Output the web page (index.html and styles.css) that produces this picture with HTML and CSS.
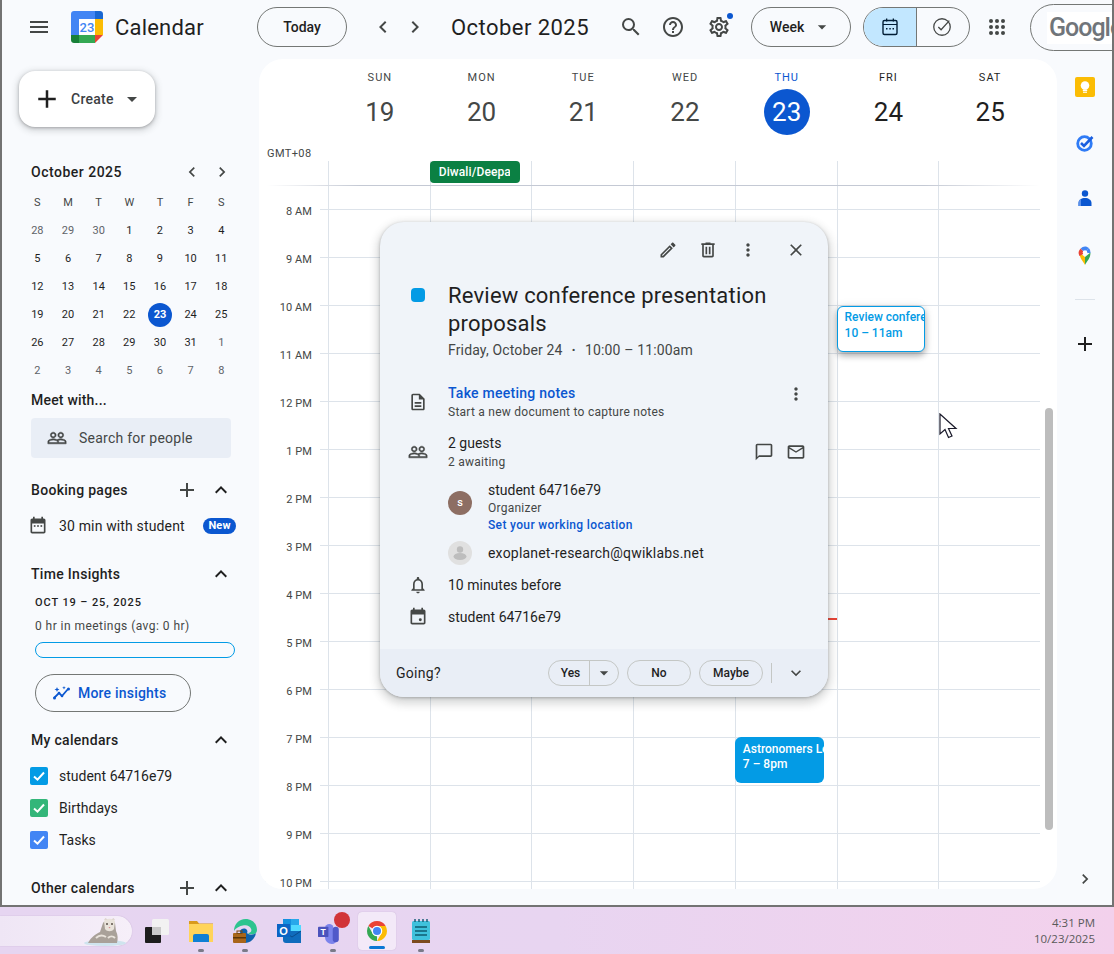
FILE: index.html
```html
<!DOCTYPE html>
<html lang="en">
<head>
<meta charset="utf-8">
<title>Calendar</title>
<link rel="stylesheet" href="styles.css">
</head>
<body>
<svg class="defs" aria-hidden="true">
  <symbol id="menu" viewBox="0 0 24 24"><path d="M3 18h18v-2H3v2zm0-5h18v-2H3v2zm0-7v2h18V6H3z"/></symbol>
  <symbol id="left" viewBox="0 0 24 24"><path d="M15.41 7.41 14 6l-6 6 6 6 1.41-1.41L10.83 12z"/></symbol>
  <symbol id="right" viewBox="0 0 24 24"><path d="M10 6 8.59 7.41 13.17 12l-4.58 4.59L10 18l6-6z"/></symbol>
  <symbol id="search" viewBox="0 0 24 24"><path d="M15.5 14h-.79l-.28-.27A6.471 6.471 0 0 0 16 9.5 6.5 6.5 0 1 0 9.5 16c1.61 0 3.09-.59 4.23-1.57l.27.28v.79l5 4.99L20.49 19l-4.99-5zm-6 0C7.01 14 5 11.99 5 9.5S7.01 5 9.5 5 14 7.01 14 9.5 11.99 14 9.5 14z"/></symbol>
  <symbol id="help" viewBox="0 0 24 24"><path d="M11 18h2v-2h-2v2zm1-16C6.48 2 2 6.48 2 12s4.48 10 10 10 10-4.48 10-10S17.52 2 12 2zm0 18c-4.41 0-8-3.59-8-8s3.59-8 8-8 8 3.59 8 8-3.59 8-8 8zm0-14c-2.21 0-4 1.79-4 4h2c0-1.1.9-2 2-2s2 .9 2 2c0 2-3 1.75-3 5h2c0-2.25 3-2.5 3-5 0-2.21-1.79-4-4-4z"/></symbol>
  <symbol id="gear" viewBox="0 0 24 24"><path d="M19.43 12.98c.04-.32.07-.64.07-.98 0-.34-.03-.66-.07-.98l2.11-1.65c.19-.15.24-.42.12-.64l-2-3.46a.5.5 0 0 0-.61-.22l-2.49 1c-.52-.4-1.08-.73-1.69-.98l-.38-2.65A.488.488 0 0 0 14 2h-4c-.25 0-.46.18-.49.42l-.38 2.65c-.61.25-1.17.59-1.69.98l-2.49-1a.566.566 0 0 0-.18-.03c-.17 0-.34.09-.43.25l-2 3.46c-.13.22-.07.49.12.64l2.11 1.65c-.04.32-.07.65-.07.98 0 .33.03.66.07.98l-2.11 1.65c-.19.15-.24.42-.12.64l2 3.46a.5.5 0 0 0 .61.22l2.49-1c.52.4 1.08.73 1.69.98l.38 2.65c.03.24.24.42.49.42h4c.25 0 .46-.18.49-.42l.38-2.65c.61-.25 1.17-.59 1.69-.98l2.49 1c.06.02.12.03.18.03.17 0 .34-.09.43-.25l2-3.46c.12-.22.07-.49-.12-.64l-2.11-1.65zm-1.98-1.71c.04.31.05.52.05.73 0 .21-.02.43-.05.73l-.14 1.13.89.7 1.08.84-.7 1.21-1.27-.51-1.04-.42-.9.68c-.43.32-.84.56-1.25.73l-1.06.43-.16 1.13-.2 1.35h-1.4l-.19-1.35-.16-1.13-1.06-.43c-.43-.18-.83-.41-1.23-.71l-.91-.7-1.06.43-1.27.51-.7-1.21 1.08-.84.89-.7-.14-1.13c-.03-.31-.05-.54-.05-.74s.02-.43.05-.73l.14-1.13-.89-.7-1.08-.84.7-1.21 1.27.51 1.04.42.9-.68c.43-.32.84-.56 1.25-.73l1.06-.43.16-1.13.2-1.35h1.39l.19 1.35.16 1.13 1.06.43c.43.18.83.41 1.23.71l.91.7 1.06-.43 1.27-.51.7 1.21-1.07.85-.89.7.14 1.13zM12 8c-2.21 0-4 1.79-4 4s1.79 4 4 4 4-1.79 4-4-1.79-4-4-4zm0 6c-1.1 0-2-.9-2-2s.9-2 2-2 2 .9 2 2-.9 2-2 2z"/></symbol>
  <symbol id="apps" viewBox="0 0 24 24"><circle cx="6" cy="6" r="2"/><circle cx="12" cy="6" r="2"/><circle cx="18" cy="6" r="2"/><circle cx="6" cy="12" r="2"/><circle cx="12" cy="12" r="2"/><circle cx="18" cy="12" r="2"/><circle cx="6" cy="18" r="2"/><circle cx="12" cy="18" r="2"/><circle cx="18" cy="18" r="2"/></symbol>
  <symbol id="add" viewBox="0 0 24 24"><path d="M19 13h-6v6h-2v-6H5v-2h6V5h2v6h6v2z"/></symbol>
  <symbol id="drop" viewBox="0 0 24 24"><path d="M7 10l5 5 5-5z"/></symbol>
  <symbol id="up" viewBox="0 0 24 24"><path d="M12 8l-6 6 1.41 1.41L12 10.83l4.59 4.58L18 14z"/></symbol>
  <symbol id="down" viewBox="0 0 24 24"><path d="M16.59 8.59 12 13.17 7.41 8.59 6 10l6 6 6-6z"/></symbol>
  <symbol id="people" viewBox="0 0 24 24"><path stroke="#444746" stroke-width=".6" d="M16.5 13c-1.2 0-3.07.34-4.5 1-1.43-.67-3.3-1-4.5-1C5.33 13 1 14.08 1 16.25V19h22v-2.75c0-2.17-4.33-3.25-6.5-3.25zm-4 4.5h-10v-1.25c0-.54 2.56-1.75 5-1.75s5 1.21 5 1.75v1.25zm9 0H14v-1.25c0-.46-.2-.86-.52-1.22.88-.3 1.96-.53 3.02-.53 2.44 0 5 1.21 5 1.75v1.25zM7.5 12c1.93 0 3.5-1.57 3.5-3.5S9.43 5 7.5 5 4 6.57 4 8.5 5.57 12 7.5 12zm0-5.5c1.1 0 2 .9 2 2s-.9 2-2 2-2-.9-2-2 .9-2 2-2zm9 5.5c1.93 0 3.5-1.57 3.5-3.5S18.43 5 16.5 5 13 6.57 13 8.5s1.57 3.5 3.5 3.5zm0-5.5c1.1 0 2 .9 2 2s-.9 2-2 2-2-.9-2-2 .9-2 2-2z"/></symbol>
  <symbol id="edit" viewBox="0 0 24 24"><path d="M3 17.25V21h3.75L17.81 9.94l-3.75-3.75L3 17.25zM5.92 19H5v-.92l9.06-9.06.92.92L5.92 19zM20.71 5.63l-2.34-2.34c-.39-.39-1.02-.39-1.41 0l-1.83 1.83 3.75 3.75 1.83-1.83c.39-.39.39-1.02 0-1.41z"/></symbol>
  <symbol id="trash" viewBox="0 0 24 24"><path d="M15 4V3H9v1H4v2h1v13c0 1.1.9 2 2 2h10c1.1 0 2-.9 2-2V6h1V4h-5zm2 15H7V6h10v13zM9 8h2v9H9zm4 0h2v9h-2z"/></symbol>
  <symbol id="more" viewBox="0 0 24 24"><path d="M12 8c1.1 0 2-.9 2-2s-.9-2-2-2-2 .9-2 2 .9 2 2 2zm0 2c-1.1 0-2 .9-2 2s.9 2 2 2 2-.9 2-2-.9-2-2-2zm0 6c-1.1 0-2 .9-2 2s.9 2 2 2 2-.9 2-2-.9-2-2-2z"/></symbol>
  <symbol id="close" viewBox="0 0 24 24"><path d="M19 6.41 17.59 5 12 10.59 6.41 5 5 6.41 10.59 12 5 17.59 6.41 19 12 13.41 17.59 19 19 17.59 13.41 12z"/></symbol>
  <symbol id="doc" viewBox="0 0 24 24"><path d="M8 16h8v2H8zm0-4h8v2H8zm6-10H6c-1.1 0-2 .9-2 2v16c0 1.1.89 2 1.99 2H18c1.1 0 2-.9 2-2V8l-6-6zm4 18H6V4h7v5h5v11z"/></symbol>
  <symbol id="chat" viewBox="0 0 24 24"><path d="M20 2H4c-1.1 0-2 .9-2 2v18l4-4h14c1.1 0 2-.9 2-2V4c0-1.1-.9-2-2-2zm0 14H6l-2 2V4h16v12z"/></symbol>
  <symbol id="mail" viewBox="0 0 24 24"><path d="M20 4H4c-1.1 0-2 .9-2 2v12c0 1.1.9 2 2 2h16c1.1 0 2-.9 2-2V6c0-1.1-.9-2-2-2zm0 14H4V8l8 5 8-5v10zm-8-7L4 6h16l-8 5z"/></symbol>
  <symbol id="bell" viewBox="0 0 24 24"><path d="M12 22c1.1 0 2-.9 2-2h-4c0 1.1.9 2 2 2zm6-6v-5c0-3.07-1.63-5.64-4.5-6.32V4c0-.83-.67-1.5-1.5-1.5s-1.5.67-1.5 1.5v.68C7.64 5.36 6 7.92 6 11v5l-2 2v1h16v-1l-2-2zm-2 1H8v-6c0-2.48 1.51-4.5 4-4.5s4 2.02 4 4.5v6z"/></symbol>
  <symbol id="event" viewBox="0 0 24 24"><path d="M16 1v2H8V1H6v2H5c-1.1 0-2 .9-2 2v14c0 1.1.9 2 2 2h14c1.1 0 2-.9 2-2V5c0-1.1-.9-2-2-2h-1V1h-2zm3 18H5V9h14v10z"/><rect x="13" y="13.5" width="3.5" height="3.5" rx="1.7"/></symbol>
  <symbol id="book" viewBox="0 0 24 24"><path d="M16 1v2H8V1H6v2H5c-1.1 0-2 .9-2 2v14c0 1.1.9 2 2 2h14c1.1 0 2-.9 2-2V5c0-1.1-.9-2-2-2h-1V1h-2zm3 18H5V9h14v10z"/><rect x="7" y="11" width="2" height="2"/><rect x="11" y="11" width="2" height="2"/><rect x="15" y="11" width="2" height="2"/></symbol>
</svg>

<div class="window">
  <header class="topbar">
    <div class="brand">
      <svg class="ic ic-menu"><use href="#menu"/></svg>
      <svg class="logo" viewBox="0 0 32 32">
        <path d="M24 0H3C1.3 0 0 1.3 0 3v21h8V8h16z" fill="#4285f4"/>
        <path d="M24 0v8h8V3c0-1.700-1.300-3-3-3z" fill="#1967d2"/>
        <path d="M24 8h8v16h-8z" fill="#fbbc04"/>
        <path d="M8 24h16v8H8z" fill="#34a853"/>
        <path d="M0 24v5c0 1.700 1.300 3 3 3h5v-8z" fill="#188038"/>
        <path d="M24 24v8l8-8z" fill="#ea4335"/>
        <path d="M8 8h16v16H8z" fill="#fff"/>
        <text x="16" y="21" text-anchor="middle" class="logo-num">23</text>
      </svg>
      <span class="brand-name">Calendar</span>
    </div>
    <button class="pill today">Today</button>
    <svg class="ic ml24"><use href="#left"/></svg>
    <svg class="ic ml8"><use href="#right"/></svg>
    <h1 class="period">October 2025</h1>
    <svg class="ic ml8 dark"><use href="#search"/></svg>
    <svg class="ic ml18 dark"><use href="#help"/></svg>
    <span class="settings"><svg class="ic dark"><use href="#gear"/></svg><i class="badge-dot"></i></span>
    <button class="pill week">Week<svg class="ic-w"><use href="#drop"/></svg></button>
    <div class="segment">
      <span class="seg seg-on"><svg class="seg-ic" viewBox="0 0 20 20"><rect x="3" y="3.500" width="14" height="14" rx="1.500" fill="none" stroke="#001d35" stroke-width="1.400"/><path d="M3 7h14v1H3zM6 1.500h1.300v3H6zM12.700 1.500H14v3h-1.300zM6 11h1.500v1.500H6zM9.300 11h1.500v1.500H9.300zM12.500 11H14v1.500h-1.500z" fill="#001d35"/></svg></span>
      <span class="seg seg-off"><svg class="seg-ic2" viewBox="0 0 24 24"><circle cx="12" cy="12" r="9" fill="none" stroke="#444746" stroke-width="1.400"/><path d="M8 12l3 3 9-10" fill="none" stroke="#444746" stroke-width="1.400"/></svg></span>
    </div>
    <svg class="ic ml15 dark"><use href="#apps"/></svg>
    <div class="account"><span class="google">Google</span></div>
  </header>

  <div class="main">
    <aside class="sidebar">
      <button class="create"><svg class="ic-plus"><use href="#add"/></svg><span>Create</span><svg class="ic dark"><use href="#drop"/></svg></button>

      <div class="mini-head"><span>October 2025</span><svg class="ic-m"><use href="#left"/></svg><svg class="ic-m"><use href="#right"/></svg></div>
      <div class="mini">
        <b class="wd">S</b><b class="wd">M</b><b class="wd">T</b><b class="wd">W</b><b class="wd">T</b><b class="wd">F</b><b class="wd">S</b>
        <span class="off">28</span><span class="off">29</span><span class="off">30</span><span>1</span><span>2</span><span>3</span><span>4</span>
        <span>5</span><span>6</span><span>7</span><span>8</span><span>9</span><span>10</span><span>11</span>
        <span>12</span><span>13</span><span>14</span><span>15</span><span>16</span><span>17</span><span>18</span>
        <span>19</span><span>20</span><span>21</span><span>22</span><span class="now"><em>23</em></span><span>24</span><span>25</span>
        <span>26</span><span>27</span><span>28</span><span>29</span><span>30</span><span>31</span><span class="off">1</span>
        <span class="off">2</span><span class="off">3</span><span class="off">4</span><span class="off">5</span><span class="off">6</span><span class="off">7</span><span class="off">8</span>
      </div>

      <div class="sec-title meet">Meet with...</div>
      <div class="people-search"><svg class="ic-m"><use href="#people"/></svg><span>Search for people</span></div>

      <div class="sec-head booking"><span>Booking pages</span><svg class="ic add-ic"><use href="#add"/></svg><svg class="ic chev"><use href="#up"/></svg></div>
      <div class="book-row"><svg class="ic-m"><use href="#book"/></svg><span>30 min with student</span><b class="new">New</b></div>

      <div class="sec-head insights"><span>Time Insights</span><svg class="ic chev"><use href="#up"/></svg></div>
      <div class="range">OCT 19 – 25, 2025</div>
      <div class="meetings">0 hr in meetings (avg: 0 hr)</div>
      <div class="bar"></div>
      <button class="more-ins">
        <svg class="ic-m" viewBox="0 0 20 20"><path d="M2 15l5-5 3 3 6-7" fill="none" stroke="#0b57d0" stroke-width="1.800"/><circle cx="2.500" cy="15" r="1.500" fill="#0b57d0"/><circle cx="7" cy="10" r="1.300" fill="#0b57d0"/><circle cx="10" cy="13" r="1.300" fill="#0b57d0"/><circle cx="16.500" cy="6" r="1.500" fill="#0b57d0"/><path d="M5 4l.7 1.800L7.500 6.500l-1.800.7L5 9l-.7-1.800L2.500 6.500l1.800-.7zM12 3l.5 1.300 1.300.5-1.300.5L12 6.500l-.5-1.200-1.300-.5 1.300-.5z" fill="#0b57d0"/></svg>
        <span>More insights</span>
      </button>

      <div class="sec-head mycal"><span>My calendars</span><svg class="ic chev"><use href="#up"/></svg></div>
      <label class="cal-row"><i class="check c-blue"><svg viewBox="0 0 18 18"><path d="M4 9.500l3.500 3.200L14 5.500" fill="none" stroke="#fff" stroke-width="2"/></svg></i>student 64716e79</label>
      <label class="cal-row"><i class="check c-green"><svg viewBox="0 0 18 18"><path d="M4 9.500l3.500 3.200L14 5.500" fill="none" stroke="#fff" stroke-width="2"/></svg></i>Birthdays</label>
      <label class="cal-row"><i class="check c-task"><svg viewBox="0 0 18 18"><path d="M4 9.500l3.500 3.200L14 5.500" fill="none" stroke="#fff" stroke-width="2"/></svg></i>Tasks</label>

      <div class="sec-head other"><span>Other calendars</span><svg class="ic add-ic"><use href="#add"/></svg><svg class="ic chev"><use href="#up"/></svg></div>
    </aside>

    <section class="panel">
      <div class="days-head">
        <div class="dh"><small>SUN</small><strong>19</strong></div>
        <div class="dh"><small>MON</small><strong>20</strong></div>
        <div class="dh"><small>TUE</small><strong>21</strong></div>
        <div class="dh"><small>WED</small><strong>22</strong></div>
        <div class="dh dh-today"><small>THU</small><strong>23</strong></div>
        <div class="dh dh-next"><small>FRI</small><strong>24</strong></div>
        <div class="dh dh-next"><small>SAT</small><strong>25</strong></div>
      </div>
      <div class="gmt">GMT+08</div>
      <div class="allday">
        <div class="ad"></div><div class="ad"><span class="chip"><span class="chip-text">Diwali/Deepavali</span></span></div><div class="ad"></div><div class="ad"></div><div class="ad"></div><div class="ad"></div><div class="ad"></div>
      </div>
      <div class="timegrid">
        <div class="hours">
          <span>8 AM</span><span>9 AM</span><span>10 AM</span><span>11 AM</span><span>12 PM</span><span>1 PM</span><span>2 PM</span><span>3 PM</span><span>4 PM</span><span>5 PM</span><span>6 PM</span><span>7 PM</span><span>8 PM</span><span>9 PM</span><span>10 PM</span>
        </div>
        <div class="day"></div>
        <div class="day"></div>
        <div class="day"></div>
        <div class="day"></div>
        <div class="day">
          <i class="nowline"></i>
          <div class="ev ev-astro"><b>Astronomers Lecture</b><b>7 – 8pm</b></div>
        </div>
        <div class="day">
          <div class="ev ev-review"><b>Review conference</b><b>10 – 11am</b></div>
        </div>
        <div class="day"></div>
      </div>
      <i class="scroll"></i>
    </section>

    <nav class="rail">
      <span class="slot"><svg class="rail-ic" viewBox="0 0 20 20"><rect width="20" height="20" rx="2" fill="#fbbc04"/><circle cx="10" cy="8.500" r="4.300" fill="#fff"/><rect x="7.800" y="12.500" width="4.400" height="1.500" fill="#fff"/><rect x="8" y="14.600" width="4" height="1.200" fill="#fff"/></svg></span>
      <span class="slot"><svg class="rail-ic" viewBox="0 0 20 20"><circle cx="9.500" cy="10.500" r="6.800" fill="none" stroke="#2f7bf6" stroke-width="2.800"/><path d="M6 10l3 3 8.500-9" fill="none" stroke="#1a5fe0" stroke-width="2.600"/></svg></span>
      <span class="slot"><svg class="rail-ic" viewBox="0 0 20 20"><circle cx="10" cy="4.500" r="3.200" fill="#0b57d0"/><path d="M3.500 17v-3c0-3 3-5 6.500-5s6.500 2 6.500 5v3z" fill="#0b57d0"/><path d="M3.500 14c0-2 1-3.400 2.500-4.200V17H3.500z" fill="#5a90ea"/></svg></span>
      <span class="slot"><svg class="rail-ic" viewBox="0 0 20 20"><path d="M10 20c-1-3-5.500-6-5.500-12.500L10 12z" fill="#fbbc04"/><path d="M10 20c1-3 5.500-6 5.500-12.500L10 12z" fill="#34a853"/><path d="M5.700 3.600 10 8l-5.500 3A6 6 0 0 1 5.700 3.600z" fill="#ea4335"/><path d="M5.700 3.600A6 6 0 0 1 10 1.500c1.500 0 2.800.6 3.800 1.500L10 8z" fill="#4285f4"/><path d="M13.800 3A6 6 0 0 1 15.500 8L10 8z" fill="#4285f4"/><circle cx="10" cy="7.500" r="2.300" fill="#fff"/></svg></span>
      <hr class="rail-sep">
      <span class="slot-plus"><svg class="ic plus-dark"><use href="#add"/></svg></span>
      <svg class="ic-m rail-more"><use href="#right"/></svg>
    </nav>
  </div>
</div>

<footer class="taskbar">
  <div class="win-search"><svg class="leopard" viewBox="0 0 44 30"><ellipse cx="23" cy="27" rx="21" ry="3" fill="#cfe4ee"/><path d="M6 27c3-6 8-9 12-11l3-9c2-4 10-4 12 0l1 8c2 4 2 8 1 12z" fill="#a9a199"/><path d="M22 5c2-3 9-3 11 0l-1 8c-2 3-7 3-9 0z" fill="#e9e3db"/><path d="M22 4l1.500-2 2 1.500zM33 4l-1.500-2-2 1.500z" fill="#d9d2c8"/><circle cx="25" cy="8" r="1" fill="#5a5148"/><circle cx="30" cy="8" r="1" fill="#5a5148"/><path d="M26.500 11h2l-1 1.500z" fill="#d58b8b"/><path d="M14 22c3-3 7-3 10-1M26 22c2-2 5-2 7 0" stroke="#e9e3db" stroke-width="2" fill="none"/></svg></div>
  <span class="tb"><svg class="tb-ic" viewBox="0 0 24 24"><rect x="7" y="0" width="17" height="16" rx="1.500" fill="#f2f2f2"/><rect x="0" y="8" width="16" height="16" rx="1" fill="#1d1d1d"/><rect x="7" y="8" width="9" height="8" fill="#c9c9c9"/></svg></span>
  <span class="tb dotted"><svg class="tb-ic" viewBox="0 0 24 24"><path d="M0 2h8l2 2.500h14V8H0z" fill="#d99a1c"/><path d="M0 5h24v18H0z" fill="#ffd45a"/><path d="M4 23v-6a2 2 0 0 1 2-2h12a2 2 0 0 1 2 2v6z" fill="#0f7fd4"/></svg></span>
  <span class="tb dotted"><svg class="tb-ic" viewBox="0 0 24 24"><path d="M1 12C1 5 6 0 12.500 0 19 0 24 4.500 24 11c0 3-2.500 4.500-5 4.500-2 0-4-.7-4-1.700 3 .6 4-2 3-4C17 7 14 5.700 11 6.300 6 7 2.500 9.500 1 12z" fill="#2cc48f"/><path d="M7 12c2-3 5-3 7-1 1 2 0 3 0 3 2 2 6 2.500 9 0-1 6-6 10-11 10-2 0-3-.5-4-1z" fill="#0f62ad"/><rect x="0" y="14" width="13" height="10" rx="1" fill="#a9661a"/><rect x="0" y="18" width="13" height="1.500" fill="#5c3506"/><rect x="4" y="12" width="5" height="2.500" fill="none" stroke="#7a4a10"/></svg></span>
  <span class="tb"><svg class="tb-ic" viewBox="0 0 24 24"><rect x="6" y="0" width="16" height="12" fill="#1490df"/><rect x="14" y="0" width="8" height="6" fill="#28a8ea"/><rect x="14" y="6" width="10" height="6" fill="#50d9ff"/><path d="M6 12h18v12H9a3 3 0 0 1-3-3z" fill="#0f6cbd"/><path d="M24 12l-9 6-9-6" fill="none" stroke="#0a4d8c"/><rect x="0" y="5" width="13" height="13" fill="#0a64c4"/><text x="6.500" y="15.500" text-anchor="middle" class="tb-letter">O</text></svg></span>
  <span class="tb dotted teams"><svg class="tb-ic tb-teams" viewBox="0 0 30 30"><circle cx="13" cy="12" r="5" fill="#7b83eb"/><path d="M8 14h14v10a6 6 0 0 1-6 6 8 8 0 0 1-8-8z" fill="#7b83eb"/><rect x="17" y="10" width="7" height="18" rx="3.500" fill="#5059c9"/><rect x="0" y="10" width="12" height="12" rx="1" fill="#4b53bc"/><text x="6" y="20" text-anchor="middle" class="tb-letter tb-t">T</text></svg><i class="notif"></i></span>
  <span class="tb tb-active"><svg class="tb-ic" viewBox="0 0 48 48"><path d="M6.680 14A20 20 0 0 1 41.320 14H24A10 10 0 0 0 15.340 19z" fill="#ea4335"/><path d="M41.320 14A20 20 0 0 1 24 44L32.660 29A10 10 0 0 0 32.660 19 10 10 0 0 0 24 14z" fill="#fbbc04"/><path d="M24 44A20 20 0 0 1 6.680 14L15.340 29A10 10 0 0 0 24 34z" fill="#34a853"/><circle cx="24" cy="24" r="10.500" fill="#fff"/><circle cx="24" cy="24" r="8" fill="#4285f4"/></svg><i class="active-bar"></i></span>
  <span class="tb dotted"><svg class="tb-ic tb-note" viewBox="0 0 18 24"><rect x="0" y="2" width="18" height="19" rx="1.500" fill="#3fc1dc"/><rect x="0" y="21" width="18" height="3" fill="#7c4a1e"/><path d="M3 0v3M7 0v3M11 0v3M15 0v3" stroke="#1b5f78" stroke-width="1.500"/><path d="M3 8h12M3 12h12M3 16h12" stroke="#0f5c72" stroke-width="1.500"/></svg></span>
  <div class="clock"><span>4:31 PM</span><span>10/23/2025</span></div>
</footer>

<svg class="pointer" viewBox="0 0 20 30"><path d="M1 1v20l5-4.500 3.500 8 3.500-1.500-3.500-7.500H17z" fill="#fff" stroke="#1a1a2a" stroke-width="1.200"/></svg>

<article class="popup">
  <div class="pop-tools">
    <span class="tool"><svg class="ic-m dark"><use href="#edit"/></svg></span>
    <span class="tool"><svg class="ic-m dark"><use href="#trash"/></svg></span>
    <span class="tool"><svg class="ic-m dark"><use href="#more"/></svg></span>
    <span class="tool tool-close"><svg class="ic-m dark"><use href="#close"/></svg></span>
  </div>
  <div class="row row-title">
    <i class="color"></i>
    <div>
      <h2>Review conference presentation proposals</h2>
      <p class="when">Friday, October 24<span class="sep">·</span>10:00 – 11:00am</p>
    </div>
  </div>
  <div class="row row-notes">
    <svg class="ic-m row-ic"><use href="#doc"/></svg>
    <div><a class="link">Take meeting notes</a><p class="sub">Start a new document to capture notes</p></div>
    <svg class="ic-m row-more dark"><use href="#more"/></svg>
  </div>
  <div class="row row-guests">
    <svg class="ic-m row-ic"><use href="#people"/></svg>
    <div><div class="t14">2 guests</div><p class="sub">2 awaiting</p></div>
    <div class="guest-actions"><svg class="ic-m"><use href="#chat"/></svg><svg class="ic-m"><use href="#mail"/></svg></div>
  </div>
  <div class="guest g-first">
    <span class="avatar av-s">s</span>
    <div><div class="t14">student 64716e79</div><p class="sub">Organizer</p><a class="link link-s">Set your working location</a></div>
  </div>
  <div class="guest g-second">
    <span class="avatar av-p"><svg viewBox="0 0 24 24"><circle cx="12" cy="8.500" r="3.200" fill="#bdbdbd"/><ellipse cx="12" cy="15.500" rx="6.500" ry="3.500" fill="#bdbdbd"/></svg></span>
    <div class="t14 email">exoplanet-research@qwiklabs.net</div>
  </div>
  <div class="row row-rem"><svg class="ic-m row-ic"><use href="#bell"/></svg><div class="t14">10 minutes before</div></div>
  <div class="row row-cal"><svg class="ic-m row-ic"><use href="#event"/></svg><div class="t14">student 64716e79</div></div>
  <div class="pop-foot">
    <span class="going">Going?</span>
    <span class="rsvp rsvp-yes"><span class="yes">Yes</span><span class="yes-drop"><svg class="ic-m"><use href="#drop"/></svg></span></span>
    <span class="rsvp rsvp-no">No</span>
    <span class="rsvp rsvp-maybe">Maybe</span>
    <i class="foot-sep"></i>
    <svg class="ic-m foot-more dark"><use href="#down"/></svg>
  </div>
</article>
</body>
</html>
```
FILE: styles.css
```css
* { box-sizing: border-box; }
html, body { margin: 0; height: 954px; overflow: hidden; }
body { position: relative; font-family: Roboto, "Liberation Sans", sans-serif; color: #1f1f1f; font-size: 14px; background: #f8fafd; }
.defs { position: absolute; width: 0; height: 0; }
button { font: inherit; color: inherit; background: none; padding: 0; }
p, h1, h2 { margin: 0; font-weight: 400; }
svg { display: block; flex: none; fill: #444746; }
i, em { font-style: normal; display: block; }

.ic { width: 24px; height: 24px; }
.ic-m { width: 20px; height: 20px; }
.ic-w { width: 20px; height: 20px; }
.ic-plus { width: 30px; height: 30px; fill: #1f1f1f; }
.plus-dark { fill: #1f1f1f; }
.dark { fill: #444746; }
.chev { fill: #1f1f1f; }
.ml8 { margin-left: 8px; }
.ml15 { margin-left: 15px; }
.ml18 { margin-left: 18px; }
.ml24 { margin-left: 24px; }

.window { height: 907px; display: flex; flex-direction: column; border-left: 2px solid #737373; border-right: 2px solid #737373; border-bottom: 2px solid #737373; overflow: hidden; background: #f8fafd; }

/* Top bar */
.topbar { height: 59px; flex: none; display: flex; align-items: center; padding-bottom: 5px; }
.brand { width: 255px; flex: none; display: flex; align-items: center; }
.ic-menu { margin-left: 25px; }
.logo { width: 32px; height: 32px; margin-left: 20px; }
.logo-num { font: 500 13px Roboto, sans-serif; fill: #4285f4; }
.brand-name { font-size: 22px; margin-left: 12px; letter-spacing: .2px; }
.pill { height: 40px; border: 1px solid #747775; border-radius: 20px; display: flex; align-items: center; justify-content: center; font-weight: 500; font-size: 14px; flex: none; }
.today { width: 90px; }
.period { font-size: 22px; width: 160px; margin-left: 24px; letter-spacing: .45px; flex: none; }
.settings { position: relative; margin-left: 22px; width: 24px; height: 24px; flex: none; }
.badge-dot { position: absolute; width: 6px; height: 6px; border-radius: 50%; background: #0b57d0; top: -2px; right: -2px; }
.week { width: 100px; margin-left: 20px; gap: 8px; }
.segment { width: 107px; height: 40px; margin-left: 12px; border: 1px solid #747775; border-radius: 20px; display: flex; overflow: hidden; flex: none; }
.seg { flex: 1; display: flex; align-items: center; justify-content: center; }
.seg-on { background: #c2e7ff; border-right: 1px solid #747775; flex: none; width: 53px; }
.seg-off { padding-right: 3px; }
.seg-ic { width: 20px; height: 20px; }
.seg-ic2 { width: 22px; height: 22px; }
.account { margin-left: 21px; width: 120px; height: 47px; flex: none; border: 1px solid #747775; border-radius: 24px 0 0 24px; padding: 7px 0 0 16px; }
.google { display: block; background: #fff; height: 32px; padding-left: 2px; font: 500 25px/31px Roboto, sans-serif; color: #70757a; letter-spacing: -1px; }

/* Main */
.main { flex: 1; display: flex; min-height: 0; }
.sidebar { width: 257px; flex: none; padding-left: 29px; overflow: hidden; }
.create { display: flex; align-items: center; width: 136px; height: 56px; margin: 12px 0 0 -12px; background: #fff; border: 0; border-radius: 16px; padding-left: 13px; font-weight: 500; font-size: 14px; letter-spacing: .25px; box-shadow: 0 1px 3px rgba(60,64,67,.35), 0 2px 6px 2px rgba(60,64,67,.18); }
.create span { margin-left: 9px; color: #3c4043; }
.create .ic { margin-left: 6px; }
.mini-head { display: flex; align-items: center; width: 201px; height: 20px; margin-top: 35px; font-weight: 500; gap: 10px; letter-spacing: .5px; }
.mini-head span { flex: 1; }
.mini { display: grid; grid-template-columns: repeat(7, 30.67px); grid-auto-rows: 28px; margin: 7px 0 0 -9px; font-size: 11px; font-weight: 400; text-align: center; line-height: 28px; color: #1f1f1f; }
.mini .wd { font-weight: 400; color: #444746; }
.mini .off { color: #5f6368; font-weight: 400; }
.mini .now { display: flex; align-items: center; justify-content: center; }
.mini .now em { width: 24px; height: 24px; line-height: 24px; border-radius: 50%; background: #0b57d0; color: #fff; font-weight: 700; }
.sec-title { font-weight: 500; line-height: 20px; letter-spacing: .2px; }
.meet { margin-top: 5px; }
.people-search { display: flex; align-items: center; gap: 12px; width: 200px; height: 40px; margin-top: 8px; padding-left: 16px; background: #e9eef6; border-radius: 4px; color: #444746; letter-spacing: .25px; }
.sec-head { display: flex; align-items: center; width: 202px; height: 20px; font-weight: 500; letter-spacing: .3px; }
.sec-head span { flex: 1; }
.add-ic { margin-right: 10px; fill: #444746; }
.booking { margin-top: 22px; }
.book-row { display: flex; align-items: center; width: 208px; height: 20px; margin: 16px 0 0 -3px; gap: 11px; letter-spacing: .15px; }
.book-row .new { margin-left: auto; width: 33px; height: 16px; line-height: 16px; text-align: center; font-size: 11px; border-radius: 8px; background: #0b57d0; color: #fff; font-weight: 700; }
.insights { margin-top: 28px; }
.range { margin: 11px 0 0 4px; font-size: 11px; line-height: 16px; font-weight: 500; letter-spacing: .9px; }
.meetings { margin: 7px 0 0 4px; font-size: 12px; line-height: 16px; color: #444746; letter-spacing: .45px; }
.bar { width: 200px; height: 16px; margin: 8px 0 0 4px; border: 1px solid #039be5; border-radius: 8px; }
.more-ins { display: flex; align-items: center; gap: 6px; width: 156px; height: 38px; margin: 16px 0 0 4px; padding-left: 16px; border: 1px solid #747775; border-radius: 19px; color: #0b57d0; font-weight: 500; font-size: 14px; letter-spacing: .2px; }
.mycal { margin-top: 18px; }
.cal-row { display: flex; align-items: center; height: 32px; margin-left: -1px; gap: 11px; }
.mycal + .cal-row { margin-top: 10px; }
.check { width: 18px; height: 18px; border-radius: 2px; }
.c-blue { background: #039be5; }
.c-green { background: #33b679; }
.c-task { background: #4285f4; }
.other { margin-top: 22px; }

/* Calendar panel */
.panel { position: relative; width: 798px; height: 830px; flex: none; background: #fff; border-radius: 24px; padding-right: 17px; overflow: hidden; }
.days-head { display: grid; grid-template-columns: repeat(7, 1fr); margin-left: 69px; height: 84px; }
.dh { display: flex; flex-direction: column; align-items: center; padding: 12px 0 0 2px; color: #444746; }
.dh small { font-size: 11px; line-height: 14px; font-weight: 400; letter-spacing: 1px; }
.dh strong { width: 46px; height: 46px; margin-top: 4px; font-size: 26px; line-height: 46px; text-align: center; font-weight: 400; border-radius: 50%; }
.dh-today small { color: #0b57d0; }
.dh-today strong { background: #0b57d0; color: #fff; }
.dh-next, .dh-next small { color: #1f1f1f; }
.gmt { height: 18px; margin-left: 8px; font-size: 11px; line-height: 22px; color: #444746; letter-spacing: .4px; }
.allday { position: relative; display: grid; grid-template-columns: repeat(7, 1fr); margin-left: 69px; height: 25px; }
.ad { border-left: 1px solid #dde3ea; min-width: 0; }
.allday::after { content: ""; position: absolute; left: -61px; right: 0; bottom: 0; height: 1px; background: linear-gradient(90deg, #fff, #c4c9d4 12%, #c4c9d4 85%, #fff); }
.chip { display: block; width: 90px; height: 22px; margin-left: -1px; padding: 0 10px 0 9px; background: #0b8043; color: #fff; font-size: 12px; font-weight: 500; line-height: 22px; border-radius: 4px; letter-spacing: .1px; }
.chip-text { display: block; overflow: hidden; white-space: nowrap; }
.timegrid { display: grid; grid-template-columns: 61px 8px repeat(7, 1fr); height: 703px; background: linear-gradient(#dde3ea 1px, transparent 1px) 0 23px / 100% 48px; }
.hours { grid-column: 1 / 3; grid-row: 1; display: flex; flex-direction: column; background: linear-gradient(90deg, #fff 61px, transparent 61px); padding-top: 14px; }
.hours span { flex: none; height: 48px; line-height: 24px; font-size: 11px; color: #444746; text-align: right; padding-right: 8px; width: 61px; letter-spacing: .1px; }
.day { position: relative; grid-row: 1; border-left: 1px solid #dde3ea; min-width: 0; }
.nowline { position: absolute; left: 0; right: 0; top: 432px; height: 2px; background: #ea4335; }
.ev { position: absolute; overflow: hidden; white-space: nowrap; font-size: 12px; line-height: 15px; border-radius: 6px; }
.ev b { display: block; font-weight: 500; }
.ev-astro { left: -1px; top: 551px; width: 89px; height: 46px; padding: 5px 0 0 8px; background: #039be5; color: #fff; }
.ev-review { left: -1px; top: 120px; width: 88px; height: 46px; line-height: 16px; background: #fff; color: #039be5; border: 1px solid #039be5; padding: 2px 0 0 7px; box-shadow: 0 4px 6px rgba(0,0,0,.25), 0 1px 10px rgba(0,0,0,.15); }
.scroll { position: absolute; right: 4px; top: 349px; width: 8px; height: 422px; background: #bdbdbd; border-radius: 4px; }

/* Rail */
.rail { flex: 1; display: flex; flex-direction: column; align-items: center; padding-bottom: 16px; }
.slot { height: 56px; flex: none; display: flex; align-items: center; }
.rail-ic { width: 20px; height: 20px; }
.rail-sep { width: 20px; height: 1px; margin: 16px 0 0; border: 0; background: #dde3ea; flex: none; }
.slot-plus { margin-top: 32px; }
.rail-more { margin-top: auto; }

/* Taskbar */
.taskbar { height: 47px; display: flex; align-items: center; background: linear-gradient(90deg, #e6d5f1, #e8d5f1 50%, #f3d1ec); }
.win-search { width: 132px; height: 30px; margin: 0 3px 0 0; display: flex; justify-content: flex-end; align-items: flex-end; background: linear-gradient(90deg, #efe6f5, #f6eff9); border-radius: 0 15px 15px 0; padding-right: 6px; box-shadow: 0 0 1px rgba(90,60,110,.4); }
.leopard { width: 44px; height: 30px; }
.tb { position: relative; width: 44px; height: 38px; flex: none; display: flex; align-items: center; justify-content: center; }
.tb-ic { width: 24px; height: 24px; }
.tb-note { width: 18px; }
.tb-teams { width: 26px; height: 26px; margin-left: -4px; }
.tb-letter { font: 700 11px "Liberation Sans", sans-serif; fill: #fff; }
.tb-t { font-size: 10px; }
.dotted::after { content: ""; position: absolute; left: 19px; bottom: -2px; width: 6px; height: 3px; border-radius: 2px; background: #7a7a88; }
.notif { position: absolute; width: 16px; height: 16px; border-radius: 50%; background: #d13438; right: 5px; top: 0; }
.tb-active { background: #f3e9f8; border-radius: 4px; width: 38px; margin: 0 3px; box-shadow: 0 0 1px rgba(120,90,140,.4); }
.active-bar { position: absolute; left: 11px; bottom: 1px; width: 16px; height: 3px; border-radius: 2px; background: #0b78d4; }
.clock { margin-left: auto; padding-right: 19px; display: flex; flex-direction: column; align-items: flex-end; font: 11.5px/16px "Open Sans", sans-serif; color: #5a5a5a; }

.pointer { position: absolute; left: 939px; top: 413px; width: 20px; height: 30px; }

/* Event popup */
.popup { position: absolute; left: 380px; top: 222px; width: 448px; height: 475px; background: #f0f4f9; border-radius: 24px; overflow: hidden; box-shadow: 0 4px 8px 3px rgba(60,64,67,.2), 0 1px 3px rgba(60,64,67,.35); }
.pop-tools { display: flex; justify-content: flex-end; height: 56px; align-items: center; padding-right: 12px; }
.tool { width: 40px; height: 40px; display: flex; align-items: center; justify-content: center; }
.tool-close { margin-left: 8px; }
.row { display: grid; grid-template-columns: 68px 1fr auto; padding-right: 22px; }
.row-title { margin-top: 4px; }
.color { width: 14px; height: 14px; margin: 6px 0 0 31px; border-radius: 4px; background: #039be5; }
h2 { font-size: 22px; line-height: 28px; padding-right: 30px; letter-spacing: .2px; }
.when { margin-top: 2px; line-height: 20px; color: #444746; font-size: 14px; letter-spacing: .15px; }
.sep { margin: 0 9px; font-weight: 700; }
.row-ic { margin: 9px 0 0 28px; }
.row-notes { margin-top: 23px; }
.row-notes .row-more { margin-top: 1px; }
.link { display: block; color: #0b57d0; font-weight: 500; line-height: 20px; letter-spacing: .25px; }
.sub { font-size: 12px; line-height: 16px; color: #444746; margin-top: 1px; letter-spacing: .25px; }
.t14 { line-height: 20px; }
.email { letter-spacing: .2px; }
.row-guests { margin-top: 13px; }
.guest-actions { display: flex; gap: 12px; margin-top: 9px; }
.guest { display: flex; gap: 16px; margin-left: 68px; }
.g-first { margin-top: 10px; }
.g-first .sub { margin-top: 0; }
.avatar { width: 24px; height: 24px; border-radius: 50%; flex: none; }
.av-s { margin-top: 11px; background: #8d6e63; color: #fff; font-size: 11px; font-weight: 500; line-height: 24px; text-align: center; }
.av-p { background: #e0e0e0; }
.link-s { font-size: 12px; line-height: 16px; margin-top: 1px; letter-spacing: .35px; }
.g-second { margin-top: 8px; align-items: center; }
.row-rem { margin-top: 10px; }
.row-rem .row-ic, .row-cal .row-ic { margin-top: 0; }
.row-cal { margin-top: 12px; }
.pop-foot { display: flex; align-items: center; height: 48px; margin-top: 22px; padding: 0 22px 0 16px; background: #e9eef6; font-size: 12px; font-weight: 500; }
.going { font-size: 14px; font-weight: 400; width: 152px; letter-spacing: .3px; }
.rsvp { height: 26px; border: 1px solid #c4c7c5; border-radius: 13px; display: flex; align-items: center; justify-content: center; }
.rsvp-yes { width: 71px; justify-content: flex-start; }
.yes { width: 41px; padding-left: 3px; text-align: center; border-right: 1px solid #c4c7c5; line-height: 24px; }
.yes-drop { flex: 1; display: flex; justify-content: center; }
.rsvp-no { width: 64px; margin-left: 8px; }
.rsvp-maybe { width: 64px; margin-left: 8px; }
.foot-sep { width: 1px; height: 20px; background: #c4c7c5; margin-left: 8px; }
.foot-more { margin-left: 14px; }
```
